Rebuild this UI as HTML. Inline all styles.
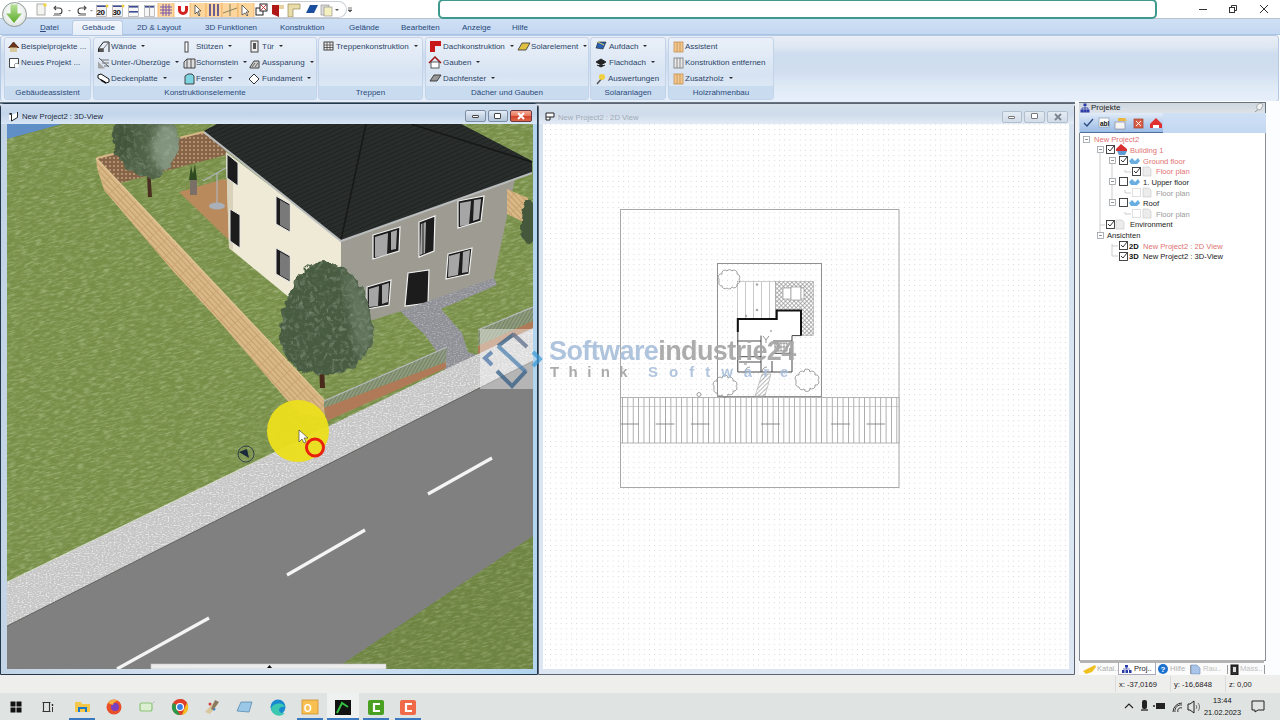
<!DOCTYPE html>
<html><head><meta charset="utf-8">
<style>
*{margin:0;padding:0;box-sizing:border-box}
html,body{width:1280px;height:720px;overflow:hidden;background:#fff;font-family:"Liberation Sans",sans-serif}
.a{position:absolute}
.t{position:absolute;white-space:nowrap;font-size:8px;line-height:10px;color:#2c4468}
#titlebar{left:0;top:0;width:1280px;height:18px;background:#fff}
#tabs{left:0;top:18px;width:1280px;height:17px;background:linear-gradient(#cfe0f5,#c3d8f1);border-top:1px solid #b8c4d0;border-bottom:1px solid #a9c4e4}
#ribbon{left:0;top:35px;width:1279px;height:67px;background:linear-gradient(#e9eef6 0%,#dfe7f2 16%,#cddcee 28%,#d0deef 55%,#e0eaf7 78%,#e6effa 100%);border:1px solid #b3c8e2;border-radius:3px}
.grp{position:absolute;top:1px;height:63px;border:1px solid #c3d4ea;border-radius:3px;background:linear-gradient(#eaf0f8 0%,#dce7f4 45%,#d6e3f2 60%,#e4edf8 100%)}
.grp .lbl{position:absolute;left:0;right:0;bottom:0;height:13px;background:#c9dbef;text-align:center;font-size:8px;line-height:13px;color:#2c4c7c}
#mdi{left:0;top:101px;width:1280px;height:574px;background:#fff}
#status{left:0;top:675px;width:1280px;height:18px;background:#eeeeec}
#taskbar{left:0;top:693px;width:1280px;height:27px;background:#dfe3e1}
.dd{display:inline-block;width:0;height:0;border-left:2px solid transparent;border-right:2px solid transparent;border-top:2.5px solid #2a2a2a;margin-left:5px;vertical-align:2px}
</style></head><body>
<div id="titlebar" class="a">
 <!-- quick access bar -->
 <div class="a" style="left:18px;top:1px;width:329px;height:17px;border:1px solid #c9ced6;border-left:none;border-radius:0 9px 9px 0;background:#fff"></div>
 <!-- orb -->
 <div class="a" style="left:2px;top:2px;width:25px;height:25px;border-radius:50%;background:radial-gradient(circle at 50% 40%,#ffffff 0%,#eef2f0 50%,#cdd6d2 100%);border:1px solid #8e9894;z-index:5"></div>
 <svg class="a" style="left:5px;top:4px;z-index:6" width="19" height="20" viewBox="0 0 19 20"><defs><linearGradient id="og" x1="0" y1="0" x2="0" y2="1"><stop offset="0" stop-color="#b9e29a"/><stop offset="1" stop-color="#5cab2a"/></linearGradient></defs><path d="M5.5 0.5h7v9h4.5l-8 9.5-8-9.5h4.5z" fill="url(#og)"/></svg>
 <!-- qat icons -->
 <svg class="a" style="left:36px;top:3px" width="320" height="14" viewBox="0 0 320 14">
  <rect x="1" y="1" width="8" height="11" fill="#f3f3f0" stroke="#999" stroke-width="0.8"/><circle cx="9" cy="2" r="1.8" fill="#f5d44a"/>
  <path d="M18 11h5a3 3 0 0 0 0-6h-4M20 3l-2 2 2 2" fill="none" stroke="#444" stroke-width="1.1"/><path d="M17 12.5h8" stroke="#777" stroke-width="0.6"/>
  <path d="M32 7l1.5 1.5 1.5-1.5z" fill="#888"/>
  <path d="M50 11h-5a3 3 0 0 1 0-6h4M48 3l2 2-2 2" fill="none" stroke="#444" stroke-width="1.1"/><path d="M42 12.5h8" stroke="#777" stroke-width="0.6"/>
  <path d="M54 7l1.5 1.5 1.5-1.5z" fill="#888"/>
  <rect x="60.5" y="2.5" width="10" height="11" fill="#f2f2f2" stroke="#999" stroke-width="0.6"/><rect x="61" y="2.5" width="9" height="1.5" fill="#3e4c96"/><text x="60.6" y="12" font-size="8" font-weight="bold" font-family="Liberation Sans" fill="#111" letter-spacing="-0.5">20</text><circle cx="71" cy="3" r="1.5" fill="#f0d040"/>
  <rect x="76.5" y="2.5" width="10" height="11" fill="#f2f2f2" stroke="#999" stroke-width="0.6"/><rect x="77" y="2.5" width="9" height="1.5" fill="#3e4c96"/><text x="76.6" y="12" font-size="8" font-weight="bold" font-family="Liberation Sans" fill="#111" letter-spacing="-0.5">30</text><circle cx="87" cy="3" r="1.5" fill="#f0d040"/>
  <rect x="92.5" y="2.5" width="10" height="11" fill="#f6f6f6" stroke="#999" stroke-width="0.6"/><rect x="93" y="3" width="9" height="1.6" fill="#3e4c96"/><rect x="93" y="8" width="9" height="1.6" fill="#3e4c96"/>
  <rect x="108.5" y="2.5" width="10" height="11" fill="#f6f6f6" stroke="#999" stroke-width="0.6"/><rect x="109" y="3" width="9" height="1.6" fill="#3e4c96"/><rect x="113" y="3" width="0.8" height="10" fill="#999"/>
  <rect x="122" y="-1" width="16" height="16" fill="#fcd69c" stroke="#f0b060" stroke-width="0.8"/><path d="M124 4h12M124 7h12M124 10h12M127 1v12M130 1v12M133 1v12" stroke="#6a4ab0" stroke-width="0.9"/>
  <path d="M142 3h3v4a2 2 0 0 0 4 0V3h3v4a5 5 0 0 1-10 0z" fill="#d02020"/>
  <rect x="154" y="-1" width="16" height="16" fill="#fcd69c" stroke="#f0b060" stroke-width="0.8"/><path d="M159 2l6 6-3 0 2 4-1 1-2-4-2 2z" fill="#fff" stroke="#333" stroke-width="0.7"/>
  <rect x="170" y="-1" width="16" height="16" fill="#fcd69c" stroke="#f0b060" stroke-width="0.8"/><path d="M174 1v12M178 1v12M182 1v12" stroke="#3a3a90" stroke-width="1.5"/>
  <rect x="186" y="-1" width="16" height="16" fill="#fcd69c" stroke="#f0b060" stroke-width="0.8"/><path d="M187 10l14-5M194 1v12" stroke="#7a7a60" stroke-width="0.9"/>
  <rect x="202" y="-1" width="16" height="16" fill="#fcd69c" stroke="#f0b060" stroke-width="0.8"/><path d="M206 2l7 7-3 0 2 3-1 1-2-3-3 2z" fill="#fff" stroke="#333" stroke-width="0.7"/>
  <rect x="220" y="5" width="7" height="7" fill="#fff" stroke="#222" stroke-width="1"/><rect x="224" y="1" width="7" height="7" fill="#fff" stroke="#222" stroke-width="1"/><path d="M225 2l5 5M230 2l-5 5" stroke="#c02020" stroke-width="0.9"/>
  <path d="M236 2h12v4h-5v8l-7-3z" fill="#b01818"/><path d="M243 2h5v4h-5z" fill="#e8d0a0"/>
  <path d="M252 1h12v5h-7v8h-5z" fill="#e8dca8" stroke="#998855" stroke-width="0.7"/>
  <path d="M270 10l4-8h8l-4 8z" fill="#1a4fa0"/>
  <rect x="285" y="2" width="8" height="10" fill="#ddd" stroke="#888" stroke-width="0.6"/><rect x="288" y="4" width="8" height="9" fill="#f4f0c0" stroke="#888" stroke-width="0.6"/>
  <path d="M299 6l2 2 2-2z" fill="#555"/>
  <path d="M312 5h4M312 7l2 2 2-2z" stroke="#555" fill="#555" stroke-width="0.8"/>
 </svg>
 <!-- search box -->
 <div class="a" style="left:438px;top:-1px;width:719px;height:20px;border:2px solid #3f9a8e;border-radius:5px;background:#fff;z-index:3"></div>
 <!-- window controls -->
 <div class="a" style="left:1199px;top:9px;width:8px;height:1px;background:#333"></div>
 <svg class="a" style="left:1228px;top:4px" width="10" height="10" viewBox="0 0 10 10"><rect x="1.5" y="3.5" width="5" height="5" fill="none" stroke="#333"/><path d="M3.5 3.5V1.5h5v5h-2" fill="none" stroke="#333"/></svg>
 <svg class="a" style="left:1259px;top:4px" width="10" height="10" viewBox="0 0 10 10"><path d="M1 1l8 8M9 1l-8 8" stroke="#333" stroke-width="1"/></svg>
</div>
<div id="tabs" class="a">
 <div class="a" style="left:72px;top:1px;width:51px;height:16px;background:linear-gradient(#f2f6fb,#e4edf8);border:1px solid #b9cbe2;border-bottom:none;border-radius:3px 3px 0 0"></div>
 <span class="t" style="left:40px;top:4px;color:#28497a"><u>D</u>atei</span>
 <span class="t" style="left:82px;top:4px;color:#28497a">Gebäude</span>
 <span class="t" style="left:137px;top:4px;color:#28497a">2D &amp; Layout</span>
 <span class="t" style="left:205px;top:4px;color:#28497a">3D Funktionen</span>
 <span class="t" style="left:280px;top:4px;color:#28497a">Konstruktion</span>
 <span class="t" style="left:349px;top:4px;color:#28497a">Gelände</span>
 <span class="t" style="left:401px;top:4px;color:#28497a">Bearbeiten</span>
 <span class="t" style="left:462px;top:4px;color:#28497a">Anzeige</span>
 <span class="t" style="left:512px;top:4px;color:#28497a">Hilfe</span>
</div>
<div id="ribbon" class="a">
 <div class="grp" style="left:3px;width:87px"><div class="lbl">Gebäudeassistent</div></div>
 <div class="grp" style="left:92px;width:224px"><div class="lbl">Konstruktionselemente</div></div>
 <div class="grp" style="left:317px;width:105px"><div class="lbl">Treppen</div></div>
 <div class="grp" style="left:424px;width:164px"><div class="lbl">Dächer und Gauben</div></div>
 <div class="grp" style="left:589px;width:76px"><div class="lbl">Solaranlagen</div></div>
 <div class="grp" style="left:667px;width:106px"><div class="lbl">Holzrahmenbau</div></div>
 <!-- text items: row1 top 6, row2 22, row3 38 (relative ribbon top 35) -->
 <span class="t" style="left:20px;top:6px">Beispielprojekte ...</span>
 <span class="t" style="left:20px;top:22px">Neues Projekt ...</span>
 <span class="t" style="left:110px;top:6px">Wände<i class="dd"></i></span>
 <span class="t" style="left:110px;top:22px">Unter-/Überzüge<i class="dd"></i></span>
 <span class="t" style="left:110px;top:38px">Deckenplatte<i class="dd"></i></span>
 <span class="t" style="left:195px;top:6px">Stützen<i class="dd"></i></span>
 <span class="t" style="left:195px;top:22px">Schornstein<i class="dd"></i></span>
 <span class="t" style="left:195px;top:38px">Fenster<i class="dd"></i></span>
 <span class="t" style="left:261px;top:6px">Tür<i class="dd"></i></span>
 <span class="t" style="left:261px;top:22px">Aussparung<i class="dd"></i></span>
 <span class="t" style="left:261px;top:38px">Fundament<i class="dd"></i></span>
 <span class="t" style="left:335px;top:6px">Treppenkonstruktion<i class="dd"></i></span>
 <span class="t" style="left:442px;top:6px">Dachkonstruktion<i class="dd"></i></span>
 <span class="t" style="left:442px;top:22px">Gauben<i class="dd"></i></span>
 <span class="t" style="left:442px;top:38px">Dachfenster<i class="dd"></i></span>
 <span class="t" style="left:530px;top:6px">Solarelement<i class="dd"></i></span>
 <span class="t" style="left:608px;top:6px">Aufdach<i class="dd"></i></span>
 <span class="t" style="left:608px;top:22px">Flachdach<i class="dd"></i></span>
 <span class="t" style="left:607px;top:38px">Auswertungen</span>
 <span class="t" style="left:684px;top:6px">Assistent</span>
 <span class="t" style="left:684px;top:22px">Konstruktion entfernen</span>
 <span class="t" style="left:684px;top:38px">Zusatzholz<i class="dd"></i></span>
 <svg class="a" style="left:0;top:0" width="800" height="60" viewBox="0 0 800 60">
  <!-- Beispielprojekte house -->
  <path d="M7.5 12L12.5 6L18 12z" fill="#6a3418"/><path d="M9 11.5h7v4.5H9z" fill="#d8c8a0"/><path d="M7.5 12L12.5 6L18 12" fill="none" stroke="#4a2010" stroke-width="0.8"/>
  <!-- Neues Projekt doc -->
  <path d="M8.5 22.5h9v5.5h-3.5v3.5h-5.5z" fill="#fff" stroke="#333" stroke-width="0.9"/><path d="M14 28h3.5v3.5H14z" fill="#fff"/>
  <!-- Wände -->
  <path d="M97.5 16V12.5L102.5 6H108V16" fill="none" stroke="#222" stroke-width="1"/><path d="M97.5 12.5H102.5L108 6M102.5 12.5V16" fill="none" stroke="#555" stroke-width="0.8"/><rect x="98" y="13" width="4" height="3" fill="#555"/>
  <!-- Unter-/Überzüge -->
  <path d="M98 22l10 9" stroke="#333" stroke-width="0.8"/><path d="M100 24h8M101 27h7M103 30h5" stroke="#777" stroke-width="1.2"/><path d="M97.5 26v6h6" fill="#a8a8a8" stroke="#999" stroke-width="0.8"/>
  <!-- Deckenplatte -->
  <path d="M97 39l3-1 8 5v3l-3 1-8-5z" fill="#fff" stroke="#111" stroke-width="1"/><path d="M100 44l5 3" stroke="#111" stroke-width="1.5"/>
  <!-- Stützen -->
  <rect x="184" y="6" width="3" height="10" fill="#fff" stroke="#333" stroke-width="0.9"/>
  <!-- Schornstein -->
  <path d="M183 26l3-3h8v9h-11z" fill="#ddd" stroke="#333" stroke-width="0.9"/><path d="M186 23v9M190 23v9" stroke="#333" stroke-width="0.8"/>
  <!-- Fenster -->
  <path d="M184 40l3-2h4l2 2v8h-9z" fill="#7ed4e0" stroke="#333" stroke-width="0.9"/>
  <!-- Tür -->
  <rect x="250" y="5" width="7" height="11" fill="#eee" stroke="#333" stroke-width="0.9"/><rect x="252" y="7" width="3" height="6" fill="#555"/>
  <!-- Aussparung -->
  <path d="M249 31l4-6h5v7h-9z" fill="#ccc" stroke="#333" stroke-width="0.9"/><path d="M251 31l3-4M254 31l3-4" stroke="#333" stroke-width="0.7"/>
  <!-- Fundament -->
  <path d="M253 38l5 5-5 5-5-5z" fill="#fff" stroke="#333" stroke-width="1"/>
  <!-- Treppen -->
  <rect x="323" y="6" width="9" height="8" fill="#eee" stroke="#333" stroke-width="0.9"/><path d="M323 9h9M323 11.5h9M326 6v8M329 6v8" stroke="#333" stroke-width="0.7"/>
  <!-- Dachkonstruktion -->
  <path d="M429 5h11v5h-6v6h-5z" fill="#c81818"/>
  <!-- Gauben -->
  <path d="M428 27l6-6 6 6" fill="none" stroke="#a01010" stroke-width="1.5"/><rect x="430" y="26" width="8" height="6" fill="#fff" stroke="#333" stroke-width="0.8"/>
  <!-- Dachfenster -->
  <path d="M429 45l4-6h7l-4 6z" fill="#999" stroke="#333" stroke-width="0.9"/>
  <!-- Solarelement -->
  <path d="M517 14l4-7h8l-4 7z" fill="#e0c040" stroke="#444" stroke-width="0.9"/>
  <!-- Aufdach -->
  <path d="M595 12l2-6h8l-3 7z" fill="#2a60b0" stroke="#222" stroke-width="0.6"/><path d="M597 6l6 3" stroke="#e8d060"/>
  <!-- Flachdach -->
  <path d="M595 26l5-3 5 3-5 3zM596 29l4 2 4-2" fill="#222" stroke="#222" stroke-width="0.9"/>
  <!-- Auswertungen -->
  <path d="M596 48l6-7" stroke="#555" stroke-width="1.5"/><circle cx="601" cy="41" r="3" fill="#f0d040"/>
  <!-- Holzrahmen -->
  <rect x="673" y="6" width="9" height="10" fill="#f0c890" stroke="#c89050" stroke-width="0.8"/><path d="M676 6v10M679 6v10" stroke="#c89050" stroke-width="0.8"/>
  <rect x="673" y="22" width="9" height="10" fill="#e8e8e8" stroke="#777" stroke-width="0.8"/><path d="M676 22v10M679 22v10" stroke="#777" stroke-width="0.8"/>
  <rect x="673" y="38" width="9" height="10" fill="#f0c890" stroke="#c89050" stroke-width="0.8"/><path d="M676 38v10M679 38v10" stroke="#c89050" stroke-width="0.8"/>
 </svg>
</div>
<div id="mdi" class="a">
 <div class="a" style="left:0;top:0;width:1075px;height:3px;background:#e4ecf5"></div>
 <div class="a" style="left:0;top:1px;width:1075px;height:2px;background:#687584"></div>
</div>
<!-- 3D window frame -->
<div class="a" style="left:0;top:103px;width:538px;height:572px;background:linear-gradient(90deg,#c2d4e6,#d6e3f1 40%,#d6e3f1 60%,#b2d4ee);border:1px solid #22384a;border-radius:4px 4px 0 0"></div>
<div class="a" style="left:1px;top:104px;width:536px;height:20px;background:linear-gradient(#cfdced,#c2d5ea 50%,#d8e6f5)"></div>
<span class="t" style="left:22px;top:112px;font-size:7.7px;color:#1d2b3c">New Project2 : 3D-View</span>
<svg class="a" style="left:8px;top:111px" width="12" height="11" viewBox="0 0 12 11"><path d="M1 3.5L3.5 2.5V9.5L1 8.5z" fill="#fff"/><path d="M3.5 4L9.5 1.5V6.5L3.5 10z" fill="#fff"/><path d="M1 3L3 2.5M3.5 4V10L9.5 6.5V1" fill="none" stroke="#222" stroke-width="1"/><circle cx="3" cy="3" r="1" fill="#111"/></svg>
<div class="a" style="left:465px;top:110px;width:21px;height:12px;border:1px solid #7d8ea4;border-radius:2px;background:linear-gradient(#e6eef8,#c8d6e6 50%,#b6c8dc)"></div>
<div class="a" style="left:472px;top:115px;width:7px;height:3px;border:1px solid #444;background:#fff;border-radius:1px"></div>
<div class="a" style="left:488px;top:110px;width:20px;height:12px;border:1px solid #7d8ea4;border-radius:2px;background:linear-gradient(#e6eef8,#c8d6e6 50%,#b6c8dc)"></div>
<div class="a" style="left:494px;top:113px;width:7px;height:6px;border:1px solid #444;background:#fff;border-radius:1px"></div>
<div class="a" style="left:510px;top:110px;width:22px;height:12px;border:1px solid #6a3a40;border-radius:2px;background:linear-gradient(#f4a890,#e87c62 45%,#d4432c 55%,#e06848)"></div>
<svg class="a" style="left:516px;top:112px" width="10" height="8" viewBox="0 0 10 8"><path d="M2 1l6 6M8 1l-6 6" stroke="#fff" stroke-width="2"/></svg>
<!-- 2D window frame -->
<div class="a" style="left:538px;top:103px;width:537px;height:572px;background:linear-gradient(#d5e0ec,#d6e2ef 4%,#dce7f3 100%);border:1px solid #5b6470;border-radius:4px 4px 0 0"></div>
<div class="a" style="left:539px;top:104px;width:535px;height:20px;background:linear-gradient(#d7e1ec,#d0dceb 50%,#e2ebf5)"></div>
<span class="t" style="left:558px;top:113px;font-size:7.7px;color:#a0aab6">New Project2 : 2D View</span>
<svg class="a" style="left:545px;top:112px" width="10" height="9" viewBox="0 0 10 9"><path d="M1 1h8v4H5v3H1z" fill="#fff" stroke="#222" stroke-width="1"/><path d="M1 5h4" stroke="#222" stroke-width="1"/></svg>
<div class="a" style="left:1002px;top:111px;width:20px;height:12px;border:1px solid #b3bfcc;border-radius:2px;background:linear-gradient(#e4ebf3,#d2dce8)"></div>
<div class="a" style="left:1008px;top:116px;width:7px;height:3px;border:1px solid #777;background:#fff;border-radius:1px"></div>
<div class="a" style="left:1024px;top:111px;width:21px;height:12px;border:1px solid #b3bfcc;border-radius:2px;background:linear-gradient(#e4ebf3,#d2dce8)"></div>
<div class="a" style="left:1031px;top:113px;width:7px;height:6px;border:1px solid #777;background:#fff;border-radius:1px"></div>
<div class="a" style="left:1047px;top:111px;width:21px;height:12px;border:1px solid #b3bfcc;border-radius:2px;background:linear-gradient(#e4ebf3,#d2dce8)"></div>
<svg class="a" style="left:1053px;top:113px" width="10" height="8" viewBox="0 0 10 8"><path d="M2 1l6 6M8 1l-6 6" stroke="#7a8490" stroke-width="1.8"/></svg>
<svg class="a" style="left:7px;top:124px" width="526" height="545" viewBox="7 124 526 545">
 <defs>
  <filter id="grassN" x="0" y="0" width="100%" height="100%">
   <feTurbulence type="fractalNoise" baseFrequency="0.12 0.6" numOctaves="3" seed="3" result="n"/>
   <feColorMatrix in="n" type="matrix" values="0 0 0 0 0.38  0 0 0 0 0.49  0 0 0 0 0.22  0 0 0 -3.0 1.6" result="c"/>
   <feComposite in="c" in2="SourceGraphic" operator="in"/>
  </filter>
  <filter id="grassL" x="0" y="0" width="100%" height="100%">
   <feTurbulence type="fractalNoise" baseFrequency="0.15 0.7" numOctaves="2" seed="11" result="n"/>
   <feColorMatrix in="n" type="matrix" values="0 0 0 0 0.60  0 0 0 0 0.68  0 0 0 0 0.38  0 0 0 2.6 -1.35" result="c"/>
   <feComposite in="c" in2="SourceGraphic" operator="in"/>
  </filter>
  <filter id="blur4" x="-50%" y="-50%" width="200%" height="200%"><feGaussianBlur stdDeviation="4"/></filter>
  <filter id="bumpy" x="-15%" y="-15%" width="130%" height="130%"><feTurbulence type="fractalNoise" baseFrequency="0.12" numOctaves="2" seed="9" result="t"/><feDisplacementMap in="SourceGraphic" in2="t" scale="9" xChannelSelector="R" yChannelSelector="G"/></filter>
  <filter id="leafN" x="-10%" y="-10%" width="120%" height="120%">
   <feTurbulence type="fractalNoise" baseFrequency="0.22" numOctaves="3" seed="5" result="n"/>
   <feColorMatrix in="n" type="matrix" values="0 0 0 0 0.48  0 0 0 0 0.56  0 0 0 0 0.46  0 0 0 1.6 -0.75" result="c"/>
   <feComposite in="c" in2="SourceGraphic" operator="in"/>
  </filter>
  <filter id="stoneN" x="0" y="0" width="100%" height="100%">
   <feTurbulence type="fractalNoise" baseFrequency="0.5 0.9" numOctaves="1" seed="2" result="n"/>
   <feColorMatrix in="n" type="matrix" values="0 0 0 0 0.93  0 0 0 0 0.93  0 0 0 0 0.93  0 0 0 3 -1.4" result="c"/>
   <feComposite in="c" in2="SourceGraphic" operator="in"/>
  </filter>
  <pattern id="lat" width="4" height="4" patternUnits="userSpaceOnUse"><rect width="4" height="4" fill="#85644a"/><rect x="1" y="1" width="2" height="2" fill="#b39068"/></pattern>
  <pattern id="fence" width="12" height="4" patternUnits="userSpaceOnUse" patternTransform="rotate(47)"><rect width="12" height="4" fill="#d8b886"/><rect width="12" height="0.8" fill="#bf9764"/><rect width="0.8" height="4" fill="#c9a472"/></pattern>
  <pattern id="rail" width="3" height="3" patternUnits="userSpaceOnUse" patternTransform="rotate(30)"><rect width="3" height="3" fill="#8f9c80"/><rect width="0.8" height="3" fill="#6e7866"/></pattern>
  <pattern id="roofp" width="9" height="4" patternUnits="userSpaceOnUse" patternTransform="rotate(-24)"><rect width="9" height="4" fill="#2a2f2d"/><rect y="3" width="9" height="1" fill="#1b1f1d"/></pattern>
 </defs>
 <!-- grass base -->
 <rect x="7" y="124" width="526" height="545" fill="#778e48"/>
 <rect x="-150" y="-50" width="850" height="900" transform="rotate(-15 270 400)" fill="#000" filter="url(#grassN)" opacity="0.7"/>
 <rect x="-150" y="-50" width="850" height="900" transform="rotate(-15 270 400)" fill="#000" filter="url(#grassL)" opacity="0.28"/>
 <!-- sky -->
 <path d="M7 124H62L7 139z" fill="#5f8fc6"/>
 <!-- back fence lattice -->
 <path d="M97 158L203 132L226 147L226 155L120 183L104 166z" fill="url(#lat)"/>
 <path d="M97 158L203 132L226 147" fill="none" stroke="#d8b888" stroke-width="2"/>
 <!-- terrace -->
 <path d="M179 192L224 179L232 182L232 243z" fill="#b98a5c"/>
 <!-- plant pot -->
 <rect x="190" y="179" width="7" height="16" fill="#7a7068"/><path d="M189 180l2-14 2 8 2-10 2 16z" fill="#2f4a20"/>
 <!-- clothesline -->
 <path d="M217 173V205M203 181L236 162" stroke="#b0b4b8" stroke-width="1.2" fill="none"/><ellipse cx="217" cy="206" rx="8" ry="3.5" fill="#aab0b8"/>
 <!-- tree 1 -->
 <path d="M147 174l3.5 0 1.5 23-4 0z" fill="#4a3020"/>
 <clipPath id="t1c"><path d="M114 112L175 112L173 124C178 130 180 140 177 150C174 162 166 172 157 178C150 180 140 178 130 171C122 165 116 158 115 150C111 140 110 130 116 124z"/></clipPath>
 <g filter="url(#bumpy)"><g clip-path="url(#t1c)">
  <rect x="105" y="110" width="80" height="75" fill="#516448"/>
  <ellipse cx="168" cy="148" rx="16" ry="26" fill="#94a490" opacity="0.75" filter="url(#blur4)"/>
  <ellipse cx="122" cy="140" rx="12" ry="20" fill="#3e5036" opacity="0.7" filter="url(#blur4)"/>
  <rect x="105" y="110" width="80" height="75" fill="#000" filter="url(#leafN)" opacity="0.5"/>
 </g></g>
 <!-- left fence -->
 <path d="M96 158L324 400L325 418L300 414L285 398L220 322L172 270L104 190L97 168z" fill="url(#fence)"/>
 <path d="M96 158L324 400" stroke="#e2c494" stroke-width="1.5"/>
 <!-- house: cream wall -->
 <path d="M226 152L341 240L341 340L229 248z" fill="#eeead5"/>
 <path d="M226 152L233 157V250L229 248z" fill="#d8d2ba"/>
 <!-- gray wall -->
 <path d="M341 240L515 179L493 282L341 330z" fill="#9e9c92"/>
 <!-- windows gray wall -->
 <g fill="#1c1c1c" stroke="#f2f2f2" stroke-width="1.2">
  <path d="M373 235L400 227L399 251L373 259z"/>
  <path d="M419 222L435 216L434 251L419 257z"/>
  <path d="M458 201L484 196L481 221L458 228z"/>
  <path d="M367 287L391 280L389 305L367 309z"/>
  <path d="M408 273L429 270L428 303L405 306z"/>
  <path d="M448 254L472 248L469 274L446 279z"/>
 </g>
 <g fill="#c9c9c9" opacity="0.8">
  <path d="M375 237L388 233L387 256L375 257z"/><path d="M391 232L397 230L396 249L391 250z"/>
  <path d="M460 203L471 201L469 225L460 226z"/><path d="M474 200L481 199L479 219L473 221z"/>
  <path d="M369 289L379 286L378 306L369 307z"/><path d="M382 285L389 283L388 302L382 304z"/>
  <path d="M449 256L460 253L458 275L448 277z"/><path d="M463 252L470 250L468 272L462 273z"/>
  <path d="M421 224L426 222L425 253L420 255z"/>
 </g>
 <path d="M423 222V254" stroke="#1c1c1c" stroke-width="1"/>
 <!-- windows cream wall -->
 <g fill="#1c1c1c" stroke="#e8e8e8" stroke-width="1">
  <path d="M276 196L290 204L290 232L276 224z"/>
  <path d="M276 248L290 256L290 282L276 274z"/>
  <path d="M227 154L238 163L238 186L227 178z"/>
  <path d="M230 209L240 215L240 248L230 241z"/>
 </g>
 <g fill="#b8b8b8" opacity="0.6"><path d="M280 200L289 205L289 230L280 225z"/><path d="M280 252L289 257L289 280L280 275z"/></g>
 <!-- roof -->
 <path d="M204 131L217 124L461 124L532 161L532 173L341 241z" fill="#282d2b"/>
 <path d="M204 131L217 124L461 124L532 161L532 173L341 241z" fill="url(#roofp)" opacity="0.7"/>
 <path d="M366 124L341 240M411 124L532 162" stroke="#161918" stroke-width="1.5"/>
 <path d="M204 132L341 241L532 173" fill="none" stroke="#b9bcbc" stroke-width="2"/>
 <!-- right fence + bush -->
 <path d="M507 189L528 198L528 224L507 214z" fill="url(#fence)"/>
 <ellipse cx="529" cy="222" rx="8" ry="22" fill="#44583a" filter="url(#bumpy)"/>
 <!-- path -->
 <path d="M400 311L494 278L497 285L441 309L462 333L468 352L480 356L446 372L437 352L425 335z" fill="#8f9096"/>
 <path d="M400 311L494 278L497 285L441 309L462 333L468 352L480 356L446 372L437 352L425 335z" fill="#000" filter="url(#stoneN)" opacity="0.35"/>
 <!-- sidewalk -->
 <path d="M7 582L325 428L446 369L480 353L533 324L533 361L7 626z" fill="#c6c6c6"/>
 <path d="M7 582L325 428L446 369L480 353L533 324L533 361L7 626z" fill="#000" filter="url(#stoneN)" opacity="0.8"/>
 <!-- road -->
 <path d="M7 626L533 361L533 536L335 669L7 669z" fill="#808080"/>
 <path d="M533 536L335 669H533z" fill="#2a3a10" opacity="0.12"/>
 <path d="M7 626L533 361" stroke="#4a4a4a" stroke-width="0.8" opacity="0.8"/>
 <path d="M7 582L325 428" stroke="#dfe8d0" stroke-width="1" opacity="0.7"/>
 <!-- dashes -->
 <path d="M428 494L492 458M287 575L365 530M117 669L209 618" stroke="#f4f4f4" stroke-width="3.2"/>
 <!-- brick walls with railings -->
 <path d="M324 401L447 347L446 362L324 408z" fill="url(#rail)" opacity="0.9"/><path d="M324 401L447 347" stroke="#b8bcc0" stroke-width="1.2"/>
 <path d="M324 408L446 362L446 368L327 421z" fill="#b07a58"/>
 <path d="M478 330L533 307L533 321L478 346z" fill="url(#rail)" opacity="0.9"/><path d="M478 330L533 307" stroke="#b8bcc0" stroke-width="1.2"/>
 <path d="M478 346L533 321L533 328L478 354z" fill="#b07a58"/>
 <!-- tree 2 -->
 <path d="M319 365h5l1 23h-5z" fill="#4a2a1a"/>
 <g filter="url(#bumpy)">
  <path d="M322 261C345 262 360 280 368 302C377 322 377 345 362 360C346 376 312 380 294 366C278 352 277 330 284 308C292 283 302 262 322 261z" fill="#475b41"/>
  <path d="M322 261C345 262 360 280 368 302C377 322 377 345 362 360C346 376 312 380 294 366C278 352 277 330 284 308C292 283 302 262 322 261z" fill="#000" filter="url(#leafN)" opacity="0.6"/>
  <path d="M340 268C356 278 366 295 372 315C376 332 372 350 362 360C352 345 350 300 340 268z" fill="#8a9a84" opacity="0.4" filter="url(#blur4)"/>
 </g>
 <!-- watermark box -->
 <rect x="480" y="329" width="53" height="60" fill="#fff" opacity="0.42"/>
 <!-- cursor highlight -->
 <circle cx="298" cy="431" r="31" fill="#ecdf1c" opacity="0.95"/>
 <circle cx="315" cy="447.5" r="8.5" fill="none" stroke="#e8200c" stroke-width="3"/>
 <path d="M299 430v12l3-3 2 4 2-1-2-4h4z" fill="#fff" stroke="#333" stroke-width="0.6"/>
 <!-- compass -->
 <circle cx="246" cy="454" r="8" fill="none" stroke="#2a3a4a" stroke-width="0.9"/><path d="M239 452l10 6-2-9z" fill="#1a2a3a"/>
 <!-- scrollbar -->
 <rect x="151" y="664" width="235" height="5" fill="#ececec" stroke="#c8c8c8" stroke-width="0.6"/><path d="M267 668l2.5-3 2.5 3z" fill="#111"/>
</svg>

<svg class="a" style="left:543px;top:124px" width="526" height="545" viewBox="543 124 526 545">
 <defs>
  <pattern id="dots" x="545" y="129" width="5.2" height="5.2" patternUnits="userSpaceOnUse"><rect x="0" y="0" width="1" height="1" fill="#d4d4d4"/></pattern>
  <pattern id="vlines" x="622" y="397" width="5.38" height="50" patternUnits="userSpaceOnUse"><rect x="0" y="0" width="0.8" height="50" fill="#9c9c9c"/></pattern>
  <pattern id="hatch" width="3" height="3" patternUnits="userSpaceOnUse" patternTransform="rotate(45)"><rect width="0.6" height="3" fill="#888"/></pattern>
  <pattern id="hatch2" width="3" height="3" patternUnits="userSpaceOnUse" patternTransform="rotate(-45)"><rect width="0.6" height="3" fill="#888"/></pattern>
 </defs>
 <rect x="543" y="124" width="526" height="545" fill="#fff"/>
 <rect x="543" y="124" width="526" height="545" fill="url(#dots)"/>
 <rect x="620.5" y="209.5" width="278.5" height="278" fill="none" stroke="#a8a8a8" stroke-width="1"/>
 <rect x="717.5" y="263.5" width="104" height="133" fill="none" stroke="#909090" stroke-width="1"/>
 <!-- road hatch -->
 <rect x="620.5" y="397.5" width="278.5" height="45.5" fill="#fff" stroke="#a0a0a0" stroke-width="0.8"/>
 <rect x="621" y="398" width="278" height="45" fill="url(#vlines)"/>
 <path d="M406 0" /><path d="M621 406.5h278" stroke="#b0b0b0" stroke-width="0.6"/><path d="M620.5 424h18.5M655.7 424h18.7M690.8 424h18.7M761 424h19M831 424h19M866.5 424h18.5" stroke="#808080" stroke-width="0.9"/>
 <!-- terrace stripes -->
 <rect x="737.5" y="281.5" width="38" height="37" fill="#fff" stroke="#aaa" stroke-width="0.6"/>
 <path d="M745.5 282v36M753.5 282v36M761.5 282v36M769.5 282v36" stroke="#b0b0b0" stroke-width="0.7"/>
 <circle cx="757" cy="284.5" r="1.3" fill="#aaa"/><circle cx="757" cy="310" r="1.3" fill="#aaa"/><circle cx="746" cy="316" r="1.2" fill="#aaa"/>
 <rect x="775.5" y="281.5" width="38" height="54" fill="url(#hatch)" stroke="#aaa" stroke-width="0.6"/>
 <rect x="775.5" y="281.5" width="38" height="54" fill="url(#hatch2)"/>
 <rect x="783" y="288" width="8" height="11" fill="#fff" stroke="#888" stroke-width="0.6"/><rect x="791" y="287" width="10" height="13" fill="#fff" stroke="#888" stroke-width="0.6"/><rect x="801" y="288" width="3" height="11" fill="#fff" stroke="#888" stroke-width="0.6"/>
 <!-- house -->
 <path d="M737.8 319H776.7V310.5H801V335.6H792V372H737.8z" fill="#fff" stroke="#444" stroke-width="1"/>
 <path d="M737.8 332V319H776.7V310.5H801V335.6" fill="none" stroke="#111" stroke-width="2"/>
 <path d="M737.8 341H761M739 356.7H761M739 362H761M761 335.6V372M773 341H792M773 353.3H792M772 361V372M790 348v12" fill="none" stroke="#333" stroke-width="0.9"/>
 <path d="M763 336l3 4 3-4M766 343v-3" fill="none" stroke="#555" stroke-width="0.6"/>
 <rect x="775" y="343" width="12" height="8" fill="#fff" stroke="#444" stroke-width="0.6"/><path d="M778 343v8M781 343v8M784 343v8M775 347h12" stroke="#444" stroke-width="0.5"/>
 <path d="M770 331h2M744 364h3" stroke="#333" stroke-width="0.6"/>
 <path d="M745 372a5 5 0 0 1 5-5M762 372a5 5 0 0 1 5-5" fill="none" stroke="#555" stroke-width="0.6"/>
 <!-- trees -->
 <g fill="none" stroke="#8a8a8a" stroke-width="0.8">
  <path d="M719 279a3 3 0 0 1 3-5a3 3 0 0 1 5-3a3 3 0 0 1 5 0a3 3 0 0 1 5 3a3 3 0 0 1 2 5a3 3 0 0 1-2 5a3 3 0 0 1-5 3a3 3 0 0 1-5 1a3 3 0 0 1-5-2a3 3 0 0 1-3-4z"/>
  <path d="M714 386a3 3 0 0 1 3-5a3 3 0 0 1 5-3a3 3 0 0 1 6 0a3 3 0 0 1 5 3a3 3 0 0 1 3 5a3 3 0 0 1-3 5a3 3 0 0 1-5 3a3 3 0 0 1-6 1a3 3 0 0 1-5-2a3 3 0 0 1-3-4z"/>
  <path d="M796 380a3 3 0 0 1 3-5a3 3 0 0 1 5-3a3 3 0 0 1 6 0a3 3 0 0 1 5 3a3 3 0 0 1 3 5a3 3 0 0 1-3 5a3 3 0 0 1-5 3a3 3 0 0 1-6 1a3 3 0 0 1-5-2a3 3 0 0 1-3-4z"/>
  <circle cx="699" cy="394.5" r="2"/>
 </g>
 <path d="M762 374l-7 22h10l6-22z" fill="url(#hatch)" stroke="#aaa" stroke-width="0.6"/>
 <!-- watermark text -->
</svg>

<!-- watermark -->
<svg class="a" style="left:474px;top:324px" width="80" height="70" viewBox="474 324 80 70">
 <g fill="none" stroke-width="4" stroke-linecap="butt" stroke-linejoin="miter" opacity="0.72">
  <path d="M498 346L514 334" stroke="#2f5c86"/>
  <path d="M513 334L527 347" stroke="#5a6a88"/>
  <path d="M498 346L526 372" stroke="#4a7fb0"/>
  <path d="M526 371L512 386L497 371" stroke="#2e5a84"/>
  <path d="M492 352L485 358L492 365" stroke="#4a74a8"/>
  <path d="M533 352L540 359L533 366" stroke="#3a9ad8"/>
 </g>
</svg>
<span class="t" style="left:549px;top:336px;font-size:27px;line-height:30px;font-weight:bold;color:#a9bfdb;letter-spacing:-0.6px;opacity:0.92">Software<span style="color:#a6a6a6">industrie24</span></span>
<span class="t" style="left:550px;top:363px;font-size:15px;line-height:18px;font-weight:bold;color:#a2a2a2;letter-spacing:9.4px;opacity:0.9">Think</span><span class="t" style="left:648px;top:363px;font-size:15px;line-height:18px;font-weight:bold;color:#a9bfdb;letter-spacing:11px;opacity:0.9">Software</span></span>
<!-- right gaps -->
<div class="a" style="left:1075px;top:101px;width:205px;height:574px;background:#fcfdfe"></div>
<div class="a" style="left:1075px;top:103px;width:4px;height:572px;background:#f1f3f5"></div>
<!-- Projekte panel -->
<div class="a" style="left:1079px;top:102px;width:187px;height:11px;background:linear-gradient(#cfd6de,#dde2e8);border-top:1px solid #69737e;border-right:1px solid #69737e"></div>
<svg class="a" style="left:1080px;top:103px" width="10" height="10" viewBox="0 0 10 10"><rect x="3.5" y="0.5" width="3" height="2.5" fill="#2a3aa8"/><path d="M5 3v2M2 5h6M2 5v1.5M5 5v1.5M8 5v1.5" stroke="#2a3aa8" stroke-width="0.8"/><rect x="0.5" y="6.5" width="3" height="3" fill="#2a3aa8"/><rect x="3.5" y="6.5" width="3" height="3" fill="#2a3aa8"/><rect x="6.5" y="6.5" width="3" height="3" fill="#2a3aa8"/></svg>
<span class="t" style="left:1091px;top:103px;font-size:8px;color:#1a1a1a">Projekte</span>
<svg class="a" style="left:1254px;top:103px" width="11" height="10" viewBox="0 0 11 10"><path d="M4 6.5a3.5 3 -40 1 1 5-4.5l-2.5 5z" fill="#f2f2f2" stroke="#9a9ea2" stroke-width="0.8"/><path d="M1 9l3-2.5" stroke="#8a8e92" stroke-width="0.9"/></svg>
<div class="a" style="left:1079px;top:113px;width:187px;height:20px;background:linear-gradient(#cfe0f5,#c3d8f2)"></div>
<div class="a" style="left:1080px;top:113px;width:83px;height:20px;background:linear-gradient(#e2ecf8,#bcd2ef 50%,#9dbde6);border-bottom:1px solid #4e6e9c"></div>
<svg class="a" style="left:1080px;top:115px" width="90" height="16" viewBox="0 0 90 16">
 <path d="M4 8l3 3 6-7" fill="none" stroke="#2a4a80" stroke-width="1.3"/>
 <rect x="19" y="3" width="10" height="9" fill="#fff" stroke="#8898b0" stroke-width="0.7"/><text x="20" y="10.5" font-size="6.5" font-weight="bold" font-family="Liberation Sans" fill="#111">abl</text>
 <path d="M35 7h10v7H35z" fill="#f4f4f4" stroke="#889" stroke-width="0.7"/><path d="M38 3h7l2 3h-9z" fill="#e8b840"/>
 <rect x="54" y="4" width="9" height="9" fill="#d86048" stroke="#a04030" stroke-width="0.7"/><path d="M56 6l5 5M61 6l-5 5" stroke="#fff" stroke-width="0.9"/>
 <path d="M70 9l6-6 6 6v4H70z" fill="#e03030"/><path d="M73 10h6v3h-6z" fill="#fff"/>
</svg>
<div class="a" style="left:1079px;top:133px;width:187px;height:528px;background:#fff;border-left:1px solid #7c8490;border-right:1px solid #8a9098;border-bottom:1px solid #8a9098"></div>
<div class="a" style="left:1080px;top:660px;width:184px;height:3px;background:#b4b4b4"></div>
<!-- tree lines -->
<svg class="a" style="left:1080px;top:133px" width="186" height="130" viewBox="1080 133 186 130">
 <g fill="none" stroke="#c0c0c0" stroke-width="0.8">
  <path d="M1100 148V236M1112 160V203M1125 170V172h6M1125 190v3h6M1125 212v2h6M1100 225h5M1112 244v12h6M1112 246h6"/>
 </g>
 <g fill="#fff" stroke="#9aa0a6" stroke-width="0.8">
  <rect x="1083.5" y="136.5" width="6" height="6"/><rect x="1097.5" y="146.5" width="6" height="6"/><rect x="1109.5" y="157.5" width="6" height="6"/><rect x="1109.5" y="178.5" width="6" height="6"/><rect x="1109.5" y="199.5" width="6" height="6"/><rect x="1097.5" y="232.5" width="6" height="6"/>
 </g>
 <path d="M1085 139.5h3M1099 149.5h3M1111 160.5h3M1111 181.5h3M1111 202.5h3M1099 235.5h3" stroke="#777" stroke-width="0.8"/>
 <g fill="#fff" stroke="#333" stroke-width="0.9">
  <rect x="1106.5" y="145.5" width="8" height="8"/><rect x="1119.5" y="156.5" width="8" height="8"/><rect x="1132.5" y="167.5" width="8" height="8"/><rect x="1119.5" y="177.5" width="8" height="8"/><rect x="1119.5" y="198.5" width="8" height="8"/><rect x="1106.5" y="220.5" width="8" height="8"/><rect x="1119.5" y="241.5" width="8" height="8"/><rect x="1119.5" y="252.5" width="8" height="8"/>
 </g>
 <g fill="#fff" stroke="#ddd" stroke-width="0.9"><rect x="1132.5" y="188.5" width="8" height="8"/><rect x="1132.5" y="209.5" width="8" height="8"/></g>
 <path d="M1108 149l2 2 4-5M1121 160l2 2 4-5M1134 171l2 2 4-5M1108 224l2 2 4-5M1121 245l2 2 4-5M1121 256l2 2 4-5" fill="none" stroke="#222" stroke-width="0.9"/>
 <!-- icons -->
 <path d="M1116 149l5-5 6 5v2h-11z" fill="#d83030"/><path d="M1117 151h10l-2 4h-6z" fill="#5a9ad0"/>
 <g fill="#6aaee0"><path d="M1129 161l3-3 3 3 3-3 2 3-3 3h-6z"/><path d="M1129 182l3-3 3 3 3-3 2 3-3 3h-6z"/><path d="M1129 203l3-3 3 3 3-3 2 3-3 3h-6z"/></g>
 <g fill="#ececec" stroke="#c8c8c8" stroke-width="0.6"><path d="M1143 167h6l2 2v7h-8z"/><path d="M1143 188h6l2 2v7h-8z"/><path d="M1143 209h6l2 2v7h-8z"/><path d="M1116 220h6l2 2v7h-8z"/></g>
</svg>
<span class="t" style="left:1094px;top:135px;font-size:7.6px;color:#e07272">New Project2</span>
<span class="t" style="left:1130px;top:146px;font-size:7.6px;color:#e07272">Building 1</span>
<span class="t" style="left:1143px;top:157px;font-size:7.6px;color:#e07272">Ground floor</span>
<span class="t" style="left:1156px;top:167px;font-size:7.6px;color:#e07272">Floor plan</span>
<span class="t" style="left:1143px;top:178px;font-size:7.6px;color:#1a1a1a">1. Upper floor</span>
<span class="t" style="left:1156px;top:189px;font-size:7.6px;color:#9a9a9a">Floor plan</span>
<span class="t" style="left:1143px;top:199px;font-size:7.6px;color:#1a1a1a">Roof</span>
<span class="t" style="left:1156px;top:210px;font-size:7.6px;color:#9a9a9a">Floor plan</span>
<span class="t" style="left:1130px;top:220px;font-size:7.6px;color:#1a1a1a">Environment</span>
<span class="t" style="left:1107px;top:231px;font-size:7.6px;color:#1a1a1a">Ansichten</span>
<span class="t" style="left:1129px;top:242px;font-size:7.6px;color:#111;font-weight:bold">2D</span>
<span class="t" style="left:1143px;top:242px;font-size:7.6px;color:#e07272">New Project2 : 2D View</span>
<span class="t" style="left:1129px;top:252px;font-size:7.6px;color:#111;font-weight:bold">3D</span>
<span class="t" style="left:1143px;top:252px;font-size:7.6px;color:#1a1a1a">New Project2 : 3D-View</span>
<!-- bottom tabs -->
<div class="a" style="left:1079px;top:663px;width:187px;height:12px;background:#fbfbfb"></div>
<div class="a" style="left:1118px;top:663px;width:38px;height:12px;background:#fff;border:1px solid #aab;border-top:none"></div>
<svg class="a" style="left:1080px;top:663px" width="190" height="12" viewBox="0 0 190 12">
 <path d="M3 8l8-4 4-2 1 2-4 5-6 2z" fill="#f0c020"/>
 <g fill="#2a3aa8"><rect x="45" y="2" width="3" height="2.5"/><rect x="42" y="7" width="2.5" height="3"/><rect x="45.5" y="7" width="2.5" height="3"/><rect x="49" y="7" width="2.5" height="3"/></g><path d="M46.5 4v2M43 6h7" stroke="#2a3aa8" stroke-width="0.7"/>
 <circle cx="83" cy="6" r="5" fill="#1a70d0"/><text x="80.5" y="9" font-size="8" font-weight="bold" font-family="Liberation Sans" fill="#fff">?</text>
 <path d="M111 2h6l3 3v6h-9z" fill="#a8c4e8" stroke="#7090b8" stroke-width="0.6"/>
 <rect x="151" y="2" width="7" height="10" fill="#333" stroke="#111"/><rect x="153" y="4" width="3" height="5" fill="#ddd"/>
</svg>
<span class="t" style="left:1097px;top:664px;font-size:7.6px;color:#b0b0b0">Katal..</span>
<span class="t" style="left:1134px;top:664px;font-size:7.6px;color:#1a1a1a">Proj..</span>
<span class="t" style="left:1170px;top:664px;font-size:7.6px;color:#b0b0b0">Hilfe</span>
<span class="t" style="left:1203px;top:664px;font-size:7.6px;color:#c0c0c0">Rau..</span>
<span class="t" style="left:1240px;top:664px;font-size:7.6px;color:#c0c0c0">Mass..</span>
<div class="a" style="left:1190px;top:665px;width:1px;height:9px;background:#999"></div>
<div class="a" style="left:1227px;top:665px;width:1px;height:9px;background:#999"></div>
<div class="a" style="left:1264px;top:665px;width:1px;height:9px;background:#999"></div>
<!-- status bar -->
<div id="status" class="a">
 <div class="a" style="left:1115px;top:1px;width:1px;height:16px;background:#dcdcdc"></div>
 <div class="a" style="left:1170px;top:1px;width:1px;height:16px;background:#dcdcdc"></div>
 <div class="a" style="left:1225px;top:1px;width:1px;height:16px;background:#dcdcdc"></div>
 <span class="t" style="left:1119px;top:5px;font-size:7.6px;color:#222">x: -37,0169</span>
 <span class="t" style="left:1174px;top:5px;font-size:7.6px;color:#222">y: -16,6848</span>
 <span class="t" style="left:1229px;top:5px;font-size:7.6px;color:#222">z: 0,00</span>
</div>
<!-- taskbar -->
<div id="taskbar" class="a">
 <div class="a" style="left:327px;top:0;width:32px;height:27px;background:#eef1ef"></div>
 <svg class="a" style="left:0;top:0" width="1280" height="27" viewBox="0 693 1280 27">
  <path d="M10.5 701.5h5v5h-5zM16.5 701.5h5v5h-5zM10.5 707.5h5v5h-5zM16.5 707.5h5v5h-5z" fill="#111"/>
  <path d="M42.5 702.5h8M42.5 711.5h8M43.5 703v8M49.5 703v8" fill="none" stroke="#333" stroke-width="1.1"/><circle cx="52.5" cy="705" r="0.9" fill="#222"/><path d="M52.5 707v5" stroke="#333" stroke-width="1"/>
  <path d="M75 702h6l1 2h8v8H75z" fill="#f4c64a"/><path d="M78 707h9v5h-2v-3h-5v3h-2z" fill="#1a78c8"/>
  <rect x="69" y="718" width="26" height="2" fill="#3a78c0"/>
  <circle cx="114" cy="707" r="7.5" fill="#e8502a"/><circle cx="115" cy="707" r="4" fill="#7a40c0"/><path d="M108 703c2-4 8-4 10-2-3 0-5 2-5 4z" fill="#f5b040"/>
  <rect x="140" y="703" width="12" height="8" rx="2" fill="#dcefd0" stroke="#8cc47a" stroke-width="1.2"/><path d="M152.5 703.5l2-2" stroke="#aaa" stroke-width="0.8"/>
  <circle cx="180" cy="707" r="8" fill="#e0402a"/><path d="M180 699a8 8 0 0 1 7 4h-7z" fill="#e0402a"/><path d="M173 703l4 7 3-3z" fill="#2a9a4a"/><path d="M187 703a8 8 0 0 1-5 12l3-8z" fill="#f5c020"/><path d="M180 715a8 8 0 0 1-7-12l4 7z" fill="#2a9a4a"/><circle cx="180" cy="707" r="3.5" fill="#3a80e0" stroke="#fff" stroke-width="1.2"/>
  <path d="M205 712l9-10 4 2-8 10z" fill="#d8c8a0"/><circle cx="210" cy="704" r="1.5" fill="#d04040"/><circle cx="214" cy="709" r="1.5" fill="#4080d0"/><path d="M215 700l4 2-6 8-2-1z" fill="#8a7a60"/>
  <path d="M237 711l4-9h11l-3 10z" fill="#9cc8e8" stroke="#5a8ab0" stroke-width="0.8"/>
  <circle cx="278" cy="707" r="7.5" fill="#1a8ad0"/><path d="M271 709c1-6 12-8 14-2-3-1-6 0-6 3 0 2 3 4 6 3-3 4-12 4-14-4z" fill="#3cc8b0"/>
  <rect x="302" y="700" width="16" height="14" fill="#f8c050" stroke="#d09030" stroke-width="0.8"/><text x="304" y="712" font-size="10" font-weight="bold" font-family="Liberation Sans" fill="#fff">O</text>
  <rect x="297" y="718" width="26" height="2" fill="#3a78c0"/>
  <rect x="335" y="700" width="16" height="15" fill="#111"/><path d="M337 713l5-10 6 4" fill="none" stroke="#30c040" stroke-width="2"/>
  <rect x="327" y="718" width="32" height="2" fill="#3a78c0"/>
  <rect x="368" y="700" width="16" height="15" rx="2" fill="#4aa020"/><path d="M380 704h-6v7h6" fill="none" stroke="#fff" stroke-width="2.2"/>
  <rect x="363" y="718" width="26" height="2" fill="#3a78c0"/>
  <rect x="400" y="700" width="16" height="15" rx="2" fill="#f06a48"/><path d="M412 704h-6v7h6" fill="none" stroke="#fff" stroke-width="2.2"/>
  <rect x="395" y="718" width="26" height="2" fill="#3a78c0"/>
  <path d="M1125 708l4-4 4 4" fill="none" stroke="#222" stroke-width="1.1"/>
  <rect x="1142" y="700" width="5" height="9" rx="2" fill="#222"/><path d="M1141 710h7" stroke="#222" stroke-width="1.3"/>
  <rect x="1156" y="703" width="9" height="6" fill="#222"/><path d="M1154 705v2" stroke="#222" stroke-width="1.5"/>
  <path d="M1173 712a9 9 0 0 1 9-9M1175 712a6 6 0 0 1 7-7M1178 712a3 3 0 0 1 4-4" fill="none" stroke="#333" stroke-width="1"/>
  <path d="M1188 704h2l4-3v12l-4-3h-2z" fill="none" stroke="#222" stroke-width="1"/><path d="M1196 705a3 3 0 0 1 0 4M1198 703a6 6 0 0 1 0 8" fill="none" stroke="#555" stroke-width="0.8"/>
  <path d="M1252 701h12v9h-6l-3 2v-2h-3z" fill="none" stroke="#222" stroke-width="1"/>
 </svg>
 <span class="t" style="left:1213px;top:3px;font-size:7.4px;color:#111">13:44</span>
 <span class="t" style="left:1204px;top:15px;font-size:7.4px;color:#111">21.02.2023</span>
</div>

</body></html>
